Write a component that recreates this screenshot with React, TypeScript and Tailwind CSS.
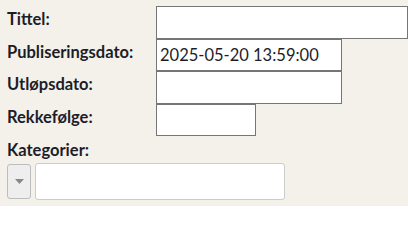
const FONT = "font-['Lato','Noto_Sans',sans-serif]"

function Row({ label, width, value }: { label: string; width: string; value?: string }) {
  return (
    <div className="flex h-[32.5px] items-start">
      <label className="w-[149px] shrink-0 pt-[3px] text-[16.5px] font-bold leading-[20px] text-[#1d1d29]">
        {label}
      </label>
      <input
        type="text"
        defaultValue={value}
        className={`${width} h-[32.5px] border border-[#767676] bg-white px-[3px] text-[16.5px] text-[#1d1d29] outline-none`}
      />
    </div>
  )
}

export default function App() {
  return (
    <div className={`${FONT} h-[206px] w-[408px] overflow-hidden bg-[#f4f1ea] pl-[7px] pt-[6px]`}>
      <Row label="Tittel:" width="w-[260px]" />
      <Row label="Publiseringsdato:" width="w-[186px]" value="2025-05-20 13:59:00" />
      <Row label="Utløpsdato:" width="w-[186px]" />
      <Row label="Rekkefølge:" width="w-[100px]" />
      <div className="pt-[4px] text-[16.5px] font-bold leading-[20px] text-[#1d1d29]">Kategorier:</div>
      <div className="mt-[3px] flex items-center gap-[4px]">
        <button
          type="button"
          className="flex h-[35px] w-[24px] items-center justify-center rounded-[3px] border border-[#bdbdbd] bg-[#eeeeee]"
        >
          <svg width="9" height="5" viewBox="0 0 9 5">
            <path d="M0 0h9L4.5 5z" fill="#888" />
          </svg>
        </button>
        <input
          type="text"
          className="h-[37px] w-[250px] rounded-[3px] border border-[#cccccc] bg-white outline-none"
        />
      </div>
    </div>
  )
}
